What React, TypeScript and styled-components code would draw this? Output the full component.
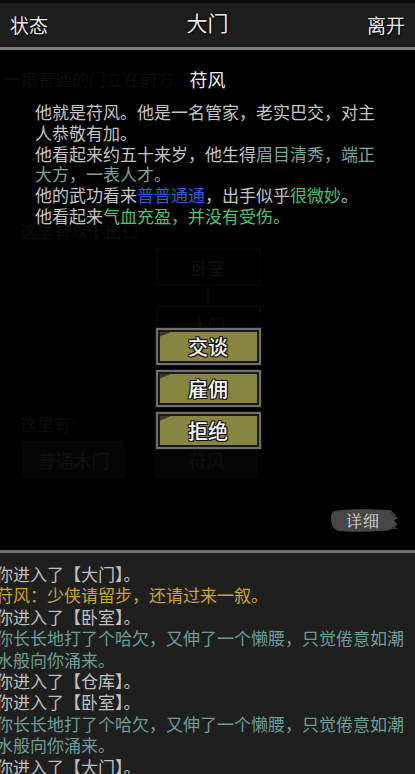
import React from "react";
import styled, { createGlobalStyle } from "styled-components";

const Global = createGlobalStyle`
  html, body { margin: 0; padding: 0; background: #000; }
  body { font-family: "Noto Sans CJK SC", "Noto Sans", sans-serif; }
  #root { width: 415px; height: 774px; overflow: hidden; }
`;

const Screen = styled.div`
  width: 415px;
  height: 774px;
  display: flex;
  flex-direction: column;
  background: #000;
  overflow: hidden;
`;

const TopBar = styled.div`
  height: 50px;
  flex: none;
  display: grid;
  grid-template-columns: 1fr auto 1fr;
  align-items: center;
  padding: 0 10px 0 10px;
  box-sizing: border-box;
  background: linear-gradient(#0a0a0a 0, #0a0a0a 3px, #1e1e1e 3px, #1e1e1e 43px, #151515 50px);
  border-bottom: 3px solid #7c7c7c;
`;

const BarText = styled.div<{ $align: "left" | "center" | "right"; $lift?: number; $size?: number }>`
  color: #ececec;
  font-size: ${(p) => p.$size ?? 19}px;
  text-align: ${(p) => p.$align};
  transform: translateY(${(p) => (p.$lift ? -p.$lift : 1)}px);
  text-shadow: 0 0 2px #000, 1px 1px 1px #000;
`;

const Main = styled.div`
  position: relative;
  height: 500px;
  flex: none;
  background: #000;
  border-bottom: 3px solid #6e6e6e;
  overflow: hidden;
`;

const Scene = styled.div`
  display: flex;
  flex-direction: column;
  padding: 18px 0 0 0;
`;

const SceneText = styled.div<{ $indent: number; $gap?: number }>`
  color: #a0a0a0;
  font-size: 17px;
  line-height: 22px;
  padding-left: ${(p) => p.$indent}px;
  margin-top: ${(p) => p.$gap ?? 0}px;
`;

const MapArea = styled.div`
  display: flex;
  flex-direction: column;
  align-items: center;
  padding-left: 1px;
  margin-top: 6px;
`;

const MapBox = styled.div`
  width: 105px;
  height: 38px;
  box-sizing: border-box;
  border: 2px solid #3a8060;
  display: flex;
  align-items: center;
  justify-content: center;
  color: #d0d0d0;
  font-size: 17px;
`;

const MapLink = styled.div`
  width: 2px;
  height: 19px;
  background: #3a8060;
`;

const ItemRow = styled.div`
  display: flex;
  gap: 30px;
  padding-left: 22px;
  margin-top: 6px;
`;

const ItemBtn = styled.div`
  width: 103px;
  height: 37px;
  box-sizing: border-box;
  border: 2px solid #555;
  background: #404040;
  color: #d8d8d8;
  font-size: 18px;
  display: flex;
  align-items: center;
  justify-content: center;
`;

const Overlay = styled.div`
  position: absolute;
  inset: 0;
  background: rgba(0, 0, 0, 0.93);
  display: flex;
  flex-direction: column;
  align-items: center;
`;

const ModalTitle = styled.div`
  color: #f0f0f0;
  font-size: 18px;
  line-height: 24px;
  margin-top: 17px;
`;

const Desc = styled.div`
  width: 344px;
  margin-top: 11px;
  padding-left: 2px;
  align-self: flex-start;
  margin-left: 33px;
  color: #c4c4c4;
  font-size: 17px;
  line-height: 20.8px;
`;

const Para = styled.div``;

const Tint = styled.span<{ $c: string }>`
  color: ${(p) => p.$c};
`;

const Actions = styled.div`
  display: flex;
  flex-direction: column;
  gap: 5px;
  margin-top: 101px;
  margin-left: 1px;
`;

const ActionBtn = styled.div`
  position: relative;
  width: 105px;
  height: 37px;
  box-sizing: border-box;
  border: 2px solid #6f6f6f;
  box-shadow: 0 0 0 1px #141414, inset 0 0 0 2px #1b1b16;
  background: #878640;
  display: flex;
  align-items: center;
  justify-content: center;
  color: #fafafa;
  font-size: 20px;
  font-weight: 500;
  text-shadow: -1px -1px 0 #111, 1px -1px 0 #111, -1px 1px 0 #111, 1px 1px 0 #111, 0 0 2px #000;
  &::before {
    content: "";
    position: absolute;
    left: 2px;
    top: 2px;
    width: 12px;
    height: 5px;
    background: #3c3b22;
    clip-path: polygon(0 0, 100% 0, 0 100%);
  }
`;

const Detail = styled.div`
  position: absolute;
  right: 17px;
  bottom: 17px;
  width: 68px;
  height: 25px;
  display: flex;
  align-items: center;
  justify-content: center;
`;

const Brush = styled.svg`
  position: absolute;
  inset: 0;
`;

const DetailText = styled.span`
  position: relative;
  color: #dcdcdc;
  font-family: "Noto Serif CJK SC", "Noto Sans CJK SC", serif;
  font-size: 16px;
  letter-spacing: 1px;
  margin-left: -2px;
`;

const Log = styled.div`
  flex: 1;
  background: #1f1f1f;
  padding: 10px 0 0 0;
  overflow: hidden;
`;

const LogLine = styled.div<{ $c: string }>`
  color: ${(p) => p.$c};
  font-size: 17px;
  line-height: 21.4px;
  margin-left: -4px;
  width: 412px;
`;

const GRAY = "#c1c1c1";
const GOLD = "#c9a630";
const TEAL = "#6e9d96";

export default function App() {
  return (
    <>
      <Global />
      <Screen>
        <TopBar>
          <BarText $align="left">状态</BarText>
          <BarText $align="center" $lift={2} $size={21}>大门</BarText>
          <BarText $align="right">离开</BarText>
        </TopBar>
        <Main>
          <Scene>
            <SceneText $indent={4}>一扇普通的门立在前方。</SceneText>
            <SceneText $indent={20} $gap={130}>这里有以下出口:</SceneText>
            <MapArea>
              <MapBox>卧室</MapBox>
              <MapLink />
              <MapBox>大门</MapBox>
            </MapArea>
            <SceneText $indent={20} $gap={70}>这里有:</SceneText>
            <ItemRow>
              <ItemBtn>普通木门</ItemBtn>
              <ItemBtn>苻风</ItemBtn>
            </ItemRow>
          </Scene>
          <Overlay>
            <ModalTitle>苻风</ModalTitle>
            <Desc>
              <Para>他就是苻风。他是一名管家，老实巴交，对主人恭敬有加。</Para>
              <Para>
                他看起来约五十来岁，他生得<Tint $c="#79a69c">眉目清秀，端正大方，一表人才。</Tint>
              </Para>
              <Para>
                他的武功看来<Tint $c="#2d5fd6">普普通通</Tint>，出手似乎<Tint $c="#4fc46c">很微妙</Tint>。
              </Para>
              <Para>
                他看起来<Tint $c="#4fc46c">气血充盈，并没有受伤。</Tint>
              </Para>
            </Desc>
            <Actions>
              <ActionBtn>交谈</ActionBtn>
              <ActionBtn>雇佣</ActionBtn>
              <ActionBtn>拒绝</ActionBtn>
            </Actions>
          </Overlay>
          <Detail>
            <Brush width="68" height="25" viewBox="0 0 68 25">
              <path
                d="M5 3 C16 1 40 1 58 2 C62 2 64 5 65 8 L68 10 L64 12 L67 16 C65 20 61 23 50 23 C34 24 18 24 8 23 C3 21 1 16 1 11 C1 7 2 4 5 3 Z"
                fill="#474747"
              />
              <path d="M60 3 L67 7 L63 8 Z M63 18 L68 21 L61 21 Z" fill="#353535" />
            </Brush>
            <DetailText>详细</DetailText>
          </Detail>
        </Main>
        <Log>
          <LogLine $c={GRAY}>你进入了【大门】。</LogLine>
          <LogLine $c={GOLD}>苻风：少侠请留步，还请过来一叙。</LogLine>
          <LogLine $c={GRAY}>你进入了【卧室】。</LogLine>
          <LogLine $c={TEAL}>你长长地打了个哈欠，又伸了一个懒腰，只觉倦意如潮水般向你涌来。</LogLine>
          <LogLine $c={GRAY}>你进入了【仓库】。</LogLine>
          <LogLine $c={GRAY}>你进入了【卧室】。</LogLine>
          <LogLine $c={TEAL}>你长长地打了个哈欠，又伸了一个懒腰，只觉倦意如潮水般向你涌来。</LogLine>
          <LogLine $c={GRAY}>你进入了【大门】。</LogLine>
        </Log>
      </Screen>
    </>
  );
}
